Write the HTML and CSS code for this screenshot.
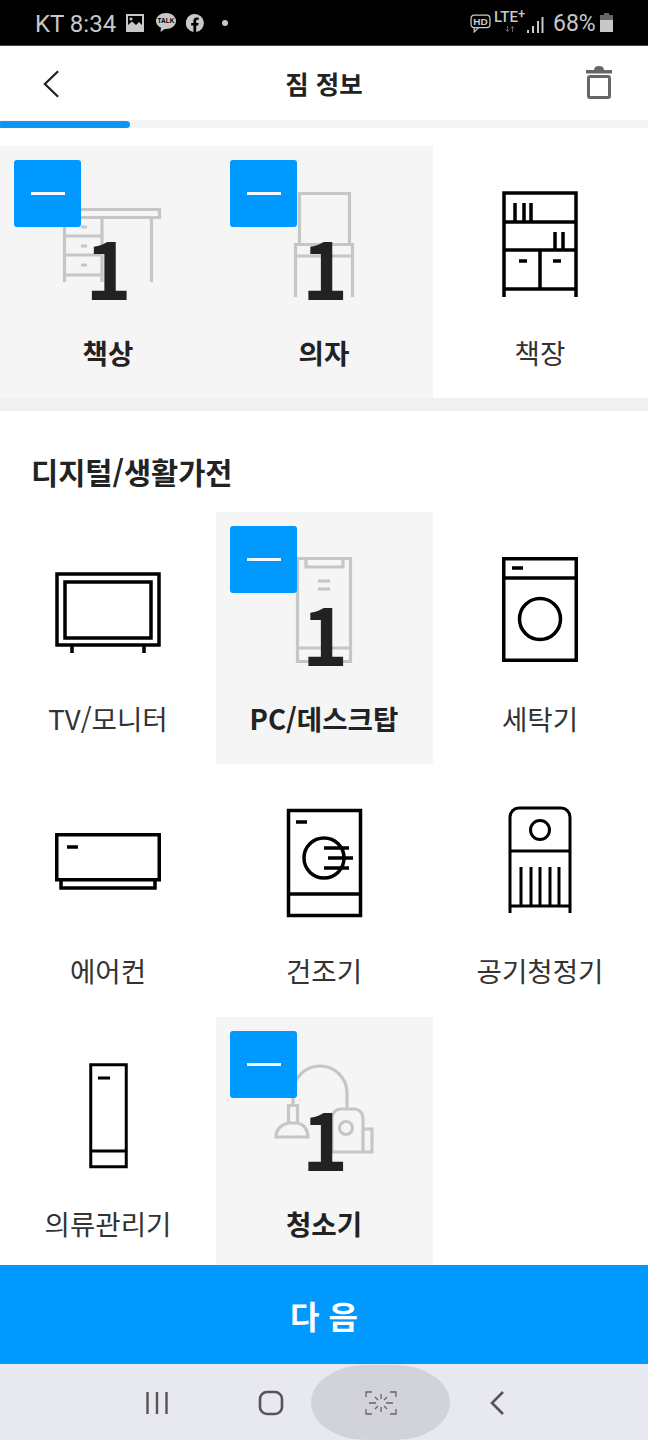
FILE: index.html
```html
<!DOCTYPE html>
<html lang="ko">
<head>
<meta charset="utf-8">
<title>짐 정보</title>
<link rel="stylesheet" href="styles.css">
</head>
<body>
<div class="app">
  <div class="status">
    <span class="carrier">KT 8:34</span>
    <svg class="st-img" viewBox="0 0 18 18"><path fill="currentColor" fill-rule="evenodd" d="M0 0H18V18H0ZM2 2V11L6 7.500 10 11 13 8 16 11V2ZM5 3.500a1.500 1.500 0 1 1-.01 0Z"/></svg>
    <svg class="st-talk" viewBox="0 0 22 22"><path fill="currentColor" d="M11 1C5.500 1 1 4.500 1 9c0 3 2 5.400 5 6.700L5.500 20l4.300-3.100c.4 0 .8.100 1.200.100 5.500 0 10-3.500 10-8S16.500 1 11 1Z"/><text x="11" y="11" class="talk-text">TALK</text></svg>
    <svg class="st-fb" viewBox="0 0 18 18"><path fill="currentColor" d="M9 0a9 9 0 0 0-1.600 17.900V11.500H5.200V9h2.200V7c0-2.300 1.300-3.500 3.400-3.500.9 0 1.900.200 1.900.200v2.100h-1.100c-1.100 0-1.400.700-1.400 1.300V9h2.400l-.4 2.500h-2v6.400A9 9 0 0 0 9 0Z"/></svg>
    <span class="st-dot"></span>
    <span class="st-spacer"></span>
    <svg class="st-hd" viewBox="0 0 20 18"><rect x="1" y="1" width="18" height="12" rx="3" fill="none" stroke="currentColor" stroke-width="1.200"/><path d="M4 13V17L8 13" fill="none" stroke="currentColor" stroke-width="1.200"/><text x="10" y="10.500" class="hd-text">HD</text></svg>
    <span class="st-lte">LTE<sup>+</sup><svg class="st-arrows" viewBox="0 0 10 6"><path d="M2.500 0V5.500M.8 3.500 2.500 5.500 4.200 3.500M7.500 6V.5M5.800 2.500 7.500 .5 9.200 2.500" fill="none" stroke="#666" stroke-width="1"/></svg></span>
    <svg class="st-signal" viewBox="0 0 18 18"><path d="M2 14v3M7 10v7M12 5v12M16.500 1v16" stroke="currentColor" stroke-width="2" fill="none"/></svg>
    <span class="st-pct">68%</span>
    <svg class="st-batt" viewBox="0 0 13 19"><path fill="#666" d="M4 0H9V2H13V7H0V2H4Z"/><rect y="7" width="13" height="12" fill="currentColor"/></svg>
  </div>

  <header class="head">
    <svg class="back" viewBox="0 0 18 30"><path d="M16 1.500 2 15l14 13.500" fill="none" stroke="#222" stroke-width="2.400"/></svg>
    <h1 class="title">짐 정보</h1>
    <svg class="trash" viewBox="0 0 26 33"><path fill="#666" d="M8 4C8 1.500 10 0 13 0s5 1.500 5 4h8v3.500H0V4Z"/><rect x="2.500" y="10.500" width="21" height="21" rx="1.500" fill="none" stroke="#666" stroke-width="3"/></svg>
  </header>

  <div class="progress"><div class="progress-fill"></div></div>

  <main class="scroll">
    <section class="first">
      <div class="grid">
        <div class="cell on">
          <svg class="ico" viewBox="0 0 120 120"><path d="M16.500 25.500H111.500V33.500H16.500ZM16.500 33.500V98M54 33.500V98M16.500 52H54M16.500 71H54M16.500 91H54M33 43H39M33 62H39M33 81H39M103.500 33.500V98"/></svg>
          <span class="minus"></span><span class="qty">1</span>
          <span class="label">책상</span>
        </div>
        <div class="cell on">
          <svg class="ico" viewBox="0 0 120 120"><path d="M35.500 60V9.500H85.500V60M30 60.500H90M30 72H90M31.500 60V113M88.500 60V113"/></svg>
          <span class="minus"></span><span class="qty">1</span>
          <span class="label">의자</span>
        </div>
        <div class="cell">
          <svg class="ico heavy" viewBox="0 0 120 120"><path d="M24 113V9H96V113M24 38H96M24 66H96M24 105H96M60 66V105M35 19V38M44 19V38M51 19V38M75 48V66M83 48V66M39 77H47M73 77H81"/></svg>
          <span class="label">책장</span>
        </div>
      </div>
    </section>

    <section class="second">
      <h2 class="sec-title">디지털/생활가전</h2>
      <div class="grid grid-rows">
        <div class="cell">
          <svg class="ico heavy" viewBox="0 0 120 120"><path d="M9 24H111V95H9ZM17 32H103V88H17ZM24 95V103M96 95V103"/></svg>
          <span class="label">TV/모니터</span>
        </div>
        <div class="cell on">
          <svg class="ico" viewBox="0 0 120 120"><path d="M33.500 8.500H86.500V111.500H33.500ZM42 8.500V17H79V8.500M54 31H66M54 39H66M33.500 98H86.500"/></svg>
          <span class="minus"></span><span class="qty">1</span>
          <span class="label">PC/데스크탑</span>
        </div>
        <div class="cell">
          <svg class="ico heavy" viewBox="0 0 120 120"><path d="M23.750 8.750H96.250V110.250H23.750ZM23.750 28H96.250M32 18H43"/><circle cx="60" cy="69" r="20.500"/></svg>
          <span class="label">세탁기</span>
        </div>
        <div class="cell">
          <svg class="ico heavy" viewBox="0 0 120 120"><path d="M8.750 32.750H111.250V77.750H8.750ZM13 78V86H107V78M19 45H30"/></svg>
          <span class="label">에어컨</span>
        </div>
        <div class="cell">
          <svg class="ico heavy" viewBox="0 0 120 120"><path d="M24.500 8.500H96.500V113.500H24.500ZM24.500 92H96.500M32 20H43M60 46H85M64 56H89M60 66H85"/><circle cx="60" cy="56" r="20"/></svg>
          <span class="label">건조기</span>
        </div>
        <div class="cell">
          <svg class="ico" viewBox="0 0 120 120"><path d="M30 111V15a9 9 0 0 1 9-9H81a9 9 0 0 1 9 9V111M30 49H90M30 104H90M41 65V104M51 65V104M60 65V104M70 65V104M79 65V104"/><circle cx="60" cy="28" r="9.500"/></svg>
          <span class="label">공기청정기</span>
        </div>
        <div class="cell">
          <svg class="ico" viewBox="0 0 120 120"><path d="M42.750 9.750H78.250V111.750H42.750ZM42.750 96H78.250M50 23H62"/></svg>
          <span class="label">의류관리기</span>
        </div>
        <div class="cell on">
          <svg class="ico" viewBox="0 0 120 120"><path d="M29 50V38a27 27 0 0 1 54 0V54M24.500 68V50.500H33.500V68M12 82C12 74 18 69 24.500 68H33.500C39 69 44 74 44 82ZM68 97V63a9 9 0 0 1 9-9H90a9 9 0 0 1 9 9V97ZM100 74H108V97H99"/><circle cx="82" cy="73" r="6.500"/></svg>
          <span class="minus"></span><span class="qty">1</span>
          <span class="label">청소기</span>
        </div>
      </div>
    </section>
  </main>

  <button class="next">다 음</button>

  <nav class="nav">
    <svg class="nav-recent" viewBox="0 0 24 24"><path d="M2.500 1V23M12 1V23M21.500 1V23" fill="none" stroke="#555" stroke-width="2.400"/></svg>
    <svg class="nav-home" viewBox="0 0 26 26"><rect x="2" y="2" width="22" height="22" rx="7" fill="none" stroke="#555" stroke-width="2.600"/></svg>
    <div class="nav-pill">
      <svg class="nav-scan" viewBox="0 0 32 24"><path d="M1 6V1H7M25 1H31V6M1 18V23H7M25 23H31V18M16 3V8M16 16V21M4 12H11M21 12H28M10 6l3 3M22 6l-3 3M10 18l3-3M22 18l-3-3" fill="none" stroke="#666" stroke-width="1.300"/></svg>
    </div>
    <svg class="nav-back" viewBox="0 0 16 26"><path d="M14 2 3 13l11 11" fill="none" stroke="#555" stroke-width="2.600"/></svg>
  </nav>
</div>
</body>
</html>
```
FILE: styles.css
```css
* { box-sizing: border-box; }
html, body { margin: 0; padding: 0; }
body {
  width: 648px;
  height: 1440px;
  overflow: hidden;
  background: #fff;
  color: #222;
  font-family: "Noto Sans CJK KR", "Noto Sans", sans-serif;
}
.app { display: flex; flex-direction: column; height: 1440px; }

/* status bar */
.status {
  flex: none;
  height: 46px;
  background: #000;
  border-bottom: 1px solid #444;
  color: #c8c8c8;
  display: flex;
  align-items: center;
  padding: 0 35px 0 35px;
}
.carrier { font: 400 24px/1 Roboto, sans-serif; width: 91px; margin-top: 2px; white-space: nowrap; }
.st-img { width: 18px; height: 18px; margin-right: 11px; }
.st-talk { width: 22px; height: 22px; margin-right: 9px; }
.st-fb { width: 18px; height: 18px; margin-right: 18px; }
.st-dot { width: 6px; height: 6px; border-radius: 50%; background: #c8c8c8; }
.st-spacer { flex: 1; }
.talk-text { font: 700 6.500px "Liberation Sans", sans-serif; fill: #000; text-anchor: middle; }
.hd-text { font: 700 9.500px "Liberation Sans", sans-serif; fill: #c8c8c8; text-anchor: middle; }
.st-hd { width: 21px; height: 19px; margin: 2px 3px 0 0; }
.st-lte { position: relative; font: 500 15px/1 Roboto, sans-serif; width: 32px; margin-top: -10px; white-space: nowrap; }
.st-lte sup { font-size: 13px; line-height: 0; vertical-align: 4px; }
.st-arrows { position: absolute; left: 11px; top: 16px; width: 10px; height: 6px; }
.st-signal { width: 18px; height: 18px; margin: 4px 9px 0 0; }
.st-pct { font: 400 23px/1 Roboto, sans-serif; width: 47px; margin-top: 2px; white-space: nowrap; }
.st-batt { width: 13px; height: 19px; margin-right: 0; }

/* header */
.head {
  flex: none;
  height: 74px;
  display: flex;
  align-items: center;
  padding: 0 36px 0 43px;
}
.back { width: 17px; height: 30px; margin-top: 1px; }
.title { flex: 1; margin: 0 0 0 2px; text-align: center; font-size: 25.500px; font-weight: 700; line-height: 1; color: #222; }
.trash { width: 26px; height: 33px; margin-top: -1px; }

.progress { flex: none; height: 8px; background: #f4f4f4; padding-top: 1px; }
.progress-fill { width: 130px; height: 7px; background: #0a96f2; border-radius: 1px 4px 4px 1px; }

/* scroll area */
.scroll { flex: 1; min-height: 0; overflow: hidden; }
.first { padding-top: 18px; border-bottom: 13px solid #f0f0f0; }
.grid { display: grid; grid-template-columns: 216px 217px 215px; grid-auto-rows: 252px; }
.grid-rows { grid-template-rows: 252px 253px 252px; }
.cell {
  position: relative;
  display: flex;
  flex-direction: column;
  align-items: center;
  padding-top: 38px;
}
.cell:nth-child(3n+2), .cell:nth-child(3n) { padding-right: 1px; }
.cell.on { background: #f5f5f5; }
.ico {
  width: 120px;
  height: 120px;
  fill: none;
  stroke: #000;
  stroke-width: 3;
}
.ico.heavy { stroke-width: 3.500; }
.cell.on .ico { stroke: #c6c6c6; stroke-width: 3.200; }
.label {
  margin-top: 22px;
  height: 52px;
  font-size: 27.600px;
  line-height: 52px;
  color: #333;
  white-space: nowrap;
}
.cell.on .label { font-weight: 700; color: #222; }
.minus {
  position: absolute;
  left: 14px;
  top: 14px;
  width: 67px;
  height: 67px;
  border-radius: 3px;
  background: #0099ff;
  display: flex;
  align-items: center;
  justify-content: center;
}
.minus::after { content: ""; width: 34px; height: 3px; background: #f2f8fc; margin-top: -1px; }
.qty {
  position: absolute;
  left: 1px;
  right: 0;
  top: 61px;
  text-align: center;
  font-size: 78px;
  font-weight: 700;
  line-height: 118px;
  color: #222;
}

.second { padding-top: 40px; }
.sec-title { margin: 0; padding-left: 31px; height: 61px; font-size: 29.500px; font-weight: 700; line-height: 40px; color: #222; white-space: nowrap; }

/* next button */
.next {
  flex: none;
  height: 99px;
  border: 0;
  background: #0099ff;
  color: #fff;
  font-family: inherit;
  font-size: 32px;
  font-weight: 700;
  padding: 0;
}

/* android nav */
.nav {
  flex: none;
  height: 76px;
  background: #e8e8f1;
  display: flex;
  align-items: center;
  padding-left: 145px;
}
.nav-recent { width: 24px; height: 24px; margin-top: 2px; }
.nav-home { width: 26px; height: 26px; margin: 2px 0 0 89px; }
.nav-pill {
  width: 139px;
  height: 75px;
  margin: 1px 0 0 27px;
  border-radius: 56px / 38px;
  background: #d2d2da;
  display: flex;
  align-items: center;
  justify-content: center;
}
.nav-scan { width: 32px; height: 24px; margin-top: 1px; }
.nav-back { width: 16px; height: 26px; margin: 2px 0 0 39px; }
```
